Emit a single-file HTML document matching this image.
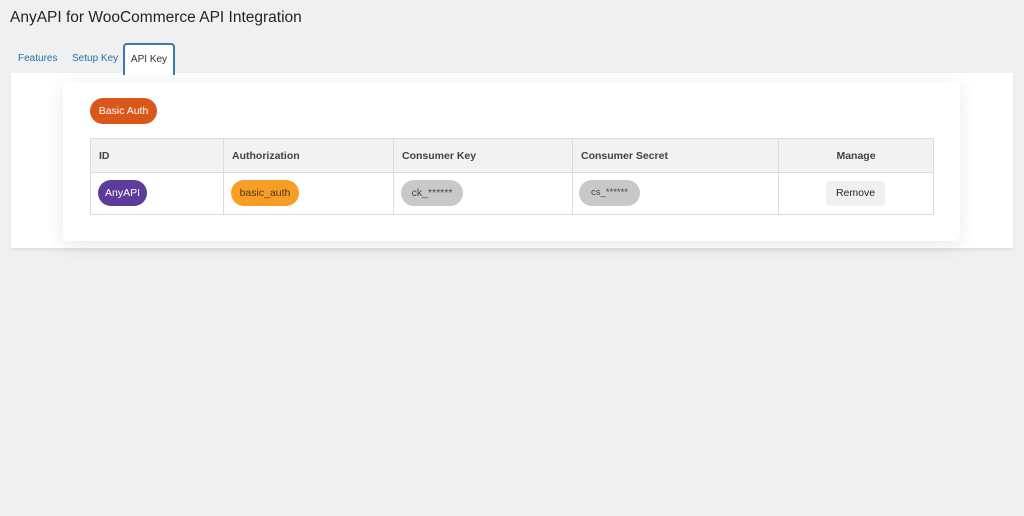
<!DOCTYPE html>
<html><head><style>
body{margin:0;background:#f0f0f1;font-family:"Liberation Sans",Arial,sans-serif;width:1024px;height:516px;overflow:hidden;position:relative;color:#1d2327}
.t{position:absolute;left:10px;top:9px;font-size:15.5px;color:#1d2327}
.tab{position:absolute;top:53px;font-size:10px;color:#2271b1}
.act{position:absolute;left:123px;top:43px;width:48px;height:30px;border:2px solid #3a78b0;border-bottom:none;border-radius:4px 4px 0 0;background:#fff;font-size:10px;color:#2c3338;text-align:center;line-height:30px;z-index:2}
.panel{position:absolute;left:11px;top:73px;width:1002px;height:175px;background:#fff;box-shadow:0 2px 3px rgba(0,0,0,.08)}
.card{position:absolute;left:63px;top:82px;width:897px;height:159px;background:#fff;border-radius:6px;box-shadow:0 4px 20px rgba(0,0,0,.09)}
.pill{position:absolute;border-radius:13px;height:26px;line-height:26px;font-size:10.5px;text-align:center}
table{position:absolute;left:90px;top:138px;border-collapse:collapse;font-size:10.5px}
td,th{border:1px solid #dcdcde;padding:0 8px;text-align:left}
th{background:#f2f2f2;height:33px;font-weight:bold;color:#3c434a}
td{height:41px}
</style></head><body>
<div class="t">AnyAPI for WooCommerce API Integration</div>
<div class="tab" style="left:18px">Features</div>
<div class="tab" style="left:72px">Setup Key</div>
<div class="act">API Key</div>
<div class="panel"></div>
<div class="card"></div>
<div class="pill" style="left:90px;top:98px;width:67px;background:#d95719;color:#fff">Basic Auth</div>
<table>
<tr><th style="width:116px">ID</th><th style="width:153px">Authorization</th><th style="width:162px">Consumer Key</th><th style="width:189px">Consumer Secret</th><th style="width:138px;text-align:center">Manage</th></tr>
<tr><td></td><td></td><td></td><td></td><td></td></tr>
</table>
<div class="pill" style="left:98px;top:180px;width:49px;background:#5e3c9c;color:#fff">AnyAPI</div>
<div class="pill" style="left:231px;top:180px;width:68px;background:#f89d26;color:#4a3a20">basic_auth</div>
<div class="pill" style="left:401px;top:180px;width:62px;background:#c8c8c8;color:#444">ck_******</div>
<div class="pill" style="left:579px;top:180px;width:61px;background:#c8c8c8;color:#444;font-size:9.5px">cs_******</div>
<div style="position:absolute;left:826px;top:181px;width:59px;height:25px;background:#f0f0f0;border-radius:4px;font-size:10.5px;text-align:center;line-height:25px">Remove</div>
</body></html>
